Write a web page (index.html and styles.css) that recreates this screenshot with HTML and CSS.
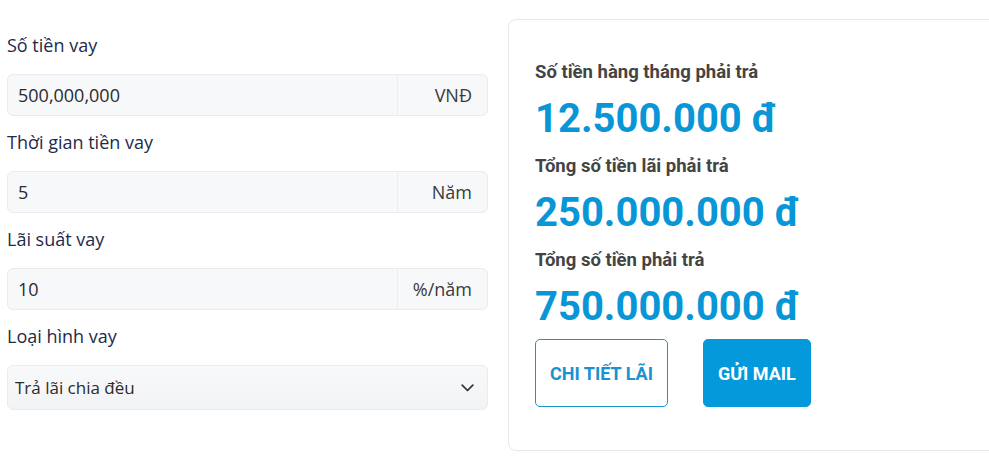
FILE: index.html
```html
<!DOCTYPE html>
<html lang="vi">
<head>
<meta charset="utf-8">
<title>Tính lãi vay</title>
<link rel="stylesheet" href="styles.css">
</head>
<body>
<div class="page">
  <div class="form-col">
    <div class="field">
      <div class="label">Số tiền vay</div>
      <div class="input-group">
        <div class="input">500,000,000</div>
        <div class="addon">VNĐ</div>
      </div>
    </div>
    <div class="field">
      <div class="label">Thời gian tiền vay</div>
      <div class="input-group">
        <div class="input">5</div>
        <div class="addon">Năm</div>
      </div>
    </div>
    <div class="field">
      <div class="label">Lãi suất vay</div>
      <div class="input-group">
        <div class="input">10</div>
        <div class="addon">%/năm</div>
      </div>
    </div>
    <div class="field">
      <div class="label">Loại hình vay</div>
      <div class="select">
        <span>Trả lãi chia đều</span>
        <svg class="chevron" width="13" height="8" viewBox="0 0 13 8"><polyline points="1.2,1.2 6.5,6.5 11.8,1.2" fill="none" stroke="#333" stroke-width="1.7" stroke-linecap="round" stroke-linejoin="round"/></svg>
      </div>
    </div>
  </div>
  <div class="result-card">
    <div class="r-label">Số tiền hàng tháng phải trả</div>
    <div class="r-value">12.500.000 đ</div>
    <div class="r-label">Tổng số tiền lãi phải trả</div>
    <div class="r-value">250.000.000 đ</div>
    <div class="r-label">Tổng số tiền phải trả</div>
    <div class="r-value">750.000.000 đ</div>
    <div class="actions">
      <div class="btn btn-outline">CHI TIẾT LÃI</div>
      <div class="btn btn-fill">GỬI MAIL</div>
    </div>
  </div>
</div>
</body>
</html>
```
FILE: styles.css
```css
html, body {
  margin: 0;
  padding: 0;
  background: #fff;
  overflow: hidden;
}
.page {
  display: flex;
  gap: 20px;
  padding-left: 7px;
  padding-top: 19px;
  width: 1200px;
  align-items: flex-start;
}
.form-col {
  width: 481px;
  padding-top: 14px;
  font-family: "Open Sans", "Noto Sans", sans-serif;
}
.field {
  margin-bottom: 14px;
}
.label {
  font-size: 18px;
  line-height: 24px;
  color: #1e2b4a;
  margin-bottom: 17px;
}
.input-group {
  display: flex;
  height: 42px;
  box-sizing: border-box;
  border: 1px solid #e8ebef;
  border-radius: 6px;
  background: #f7f8fa;
  overflow: hidden;
}
.input {
  flex: 1;
  font-size: 18px;
  line-height: 40px;
  padding-left: 10px;
  color: #2b2b2b;
}
.addon {
  width: 74px;
  padding-right: 15px;
  text-align: right;
  font-size: 18px;
  line-height: 40px;
  color: #3a3a3a;
  border-left: 1px solid #eceef1;
}
.select {
  display: flex;
  align-items: center;
  justify-content: space-between;
  height: 45px;
  box-sizing: border-box;
  border: 1px solid #e8ebef;
  border-radius: 6px;
  background: linear-gradient(#f8f9fa, #f2f3f5);
  padding: 0 13px 0 7px;
  font-size: 17px;
  color: #2b2b2b;
}
.chevron {
  display: block;
}
.result-card {
  width: 560px;
  box-sizing: border-box;
  border: 1px solid #e6e7e9;
  border-radius: 8px;
  padding: 40px 26px 43px;
  font-family: Roboto, "Liberation Sans", sans-serif;
}
.r-label {
  font-size: 18.5px;
  font-weight: 700;
  line-height: 24px;
  color: #444;
  margin-bottom: 11px;
}
.r-value {
  font-size: 40px;
  font-weight: 700;
  line-height: 48px;
  color: #0996d7;
  margin-bottom: 11px;
}
.actions {
  display: flex;
  gap: 35px;
  margin-top: -3px;
}
.btn {
  height: 68px;
  box-sizing: border-box;
  padding: 0 14px;
  display: flex;
  align-items: center;
  font-size: 18px;
  font-weight: 700;
  border-radius: 5px;
}
.btn-outline {
  border: 1px solid #1b93cf;
  color: #1a92cf;
  background: #fff;
}
.btn-fill {
  background: #0499db;
  color: #fff;
  border: 1px solid #0499db;
}
```
